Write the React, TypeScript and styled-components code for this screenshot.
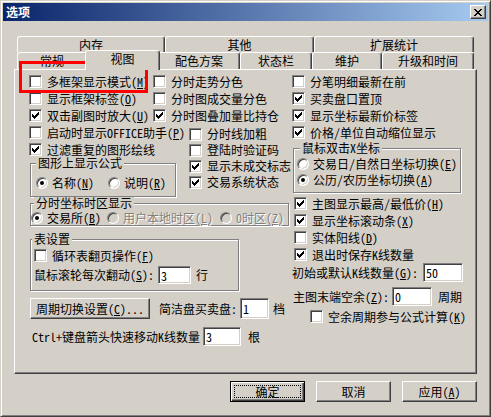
import styled, { createGlobalStyle, css } from "styled-components"
import type { ReactNode } from "react"

const FONT = `"Noto Sans CJK SC", "Liberation Sans", sans-serif`

const GlobalStyle = createGlobalStyle`
  html, body {
    margin: 0;
    background: #d4d0c8;
  }
  * {
    box-sizing: border-box;
  }
  body {
    font-family: ${FONT};
    font-size: 12px;
    color: #000;
    font-feature-settings: "hwid";
  }
`

const TICK_TOPS = [2, 3, 4, 3, 2, 1, 0]

function Tick() {
  return (
    <svg width="7" height="7" viewBox="0 0 7 7" shapeRendering="crispEdges">
      {TICK_TOPS.map((y, x) => (
        <rect key={x} x={x} y={y} width="1" height="3" fill="#000" />
      ))}
    </svg>
  )
}

function CloseGlyph() {
  return (
    <svg width="8" height="7" viewBox="0 0 8 7" shapeRendering="crispEdges">
      <path
        d="M0 0h2v1h1v1h2V1h1V0h2v1H7v1H6v1H5v1h1v1h1v1h1v1H6V6H5V5H3v1H2v1H0V6h1V5h1V4h1V3H2V2H1V1H0z"
        fill="#000"
      />
    </svg>
  )
}

type CheckProps = {
  checked?: boolean
  h?: number
  ml?: number
  mt?: number
  children: ReactNode
}

function Check({ checked, h = 17, ml = 0, mt = 0, children }: CheckProps) {
  return (
    <Item $h={h} $ml={ml} $mt={mt}>
      <CheckBox>{checked && <Tick />}</CheckBox>
      <span>{children}</span>
    </Item>
  )
}

type RadioProps = {
  on?: boolean
  disabled?: boolean
  w?: number
  h?: number
  children: ReactNode
}

function Radio({ on, disabled, w, h = 16, children }: RadioProps) {
  return (
    <Item $h={h} $w={w} $gap={4}>
      <RadioCircle $disabled={disabled}>{on && <RadioDot />}</RadioCircle>
      <Caption $disabled={disabled}>{children}</Caption>
    </Item>
  )
}

function K({ children }: { children: string }) {
  return (
    <>
      (<Key>{children}</Key>)
    </>
  )
}

export default function App() {
  return (
    <>
      <GlobalStyle />
      <Window>
        <TitleBar>
          <Title>选项</Title>
          <CloseButton>
            <CloseGlyph />
          </CloseButton>
        </TitleBar>

        <Body>
          <TabRow $h={16}>
            <Tab $w={148}>内存</Tab>
            <Tab $w={149}>其他</Tab>
            <Tab $w={160}>扩展统计</Tab>
          </TabRow>
          <TabRow $h={17}>
            <Tab $w={70}>常规</Tab>
            <Tab $w={71} $active>
              视图
            </Tab>
            <Tab $w={82}>配色方案</Tab>
            <Tab $w={72}>状态栏</Tab>
            <Tab $w={70}>维护</Tab>
            <Tab $w={92}>升级和时间</Tab>
          </TabRow>

          <Panel>
            <LeftCol>
              <PairRow>
                <Check>
                  多框架显示模式<K>M</K>
                </Check>
                <Check>分时走势分色</Check>
              </PairRow>
              <PairRow>
                <Check>
                  显示框架标签<K>O</K>
                </Check>
                <Check>分时图成交量分色</Check>
              </PairRow>
              <PairRow>
                <Check checked>
                  双击副图时放大<K>U</K>
                </Check>
                <Check checked>分时图叠加量比持仓</Check>
              </PairRow>

              <SplitBlock>
                <BlockLeft>
                  <Check>
                    启动时显示OFFICE助手<K>P</K>
                  </Check>
                  <Check checked>过滤重复的图形绘线</Check>
                  <Group $w={146} $h={34} $mt={5} $ml={1} $pt={11} $pl={5}>
                    <Legend $left={5}>图形上显示公式</Legend>
                    <RadioLine>
                      <Radio on w={72}>
                        名称<K>N</K>
                      </Radio>
                      <Radio>
                        说明<K>R</K>
                      </Radio>
                    </RadioLine>
                  </Group>
                </BlockLeft>
                <BlockRight>
                  <Check h={16}>分时线加粗</Check>
                  <Check h={16}>登陆时验证码</Check>
                  <Check h={16} checked>
                    显示未成交标志
                  </Check>
                  <Check h={16} checked>
                    交易系统状态
                  </Check>
                </BlockRight>
              </SplitBlock>

              <Group $w={259} $h={23} $mt={6} $ml={1} $pt={7} $pl={0}>
                <Legend $left={3}>分时坐标时区显示</Legend>
                <RadioLine>
                  <Radio on w={76} h={14}>
                    交易所<K>B</K>
                  </Radio>
                  <Radio disabled w={113} h={14}>
                    用户本地时区<K>L</K>
                  </Radio>
                  <Radio disabled h={14}>
                    0时区<K>Z</K>
                  </Radio>
                </RadioLine>
              </Group>

              <Group $w={209} $h={52} $mt={13} $ml={1} $pt={7} $pl={3}>
                <Legend $left={1}>表设置</Legend>
                <Check>
                  循环表翻页操作<K>F</K>
                </Check>
                <FieldRow $h={18} $mt={2}>
                  <FieldLabel $w={124}>
                    鼠标滚轮每次翻动<K>S</K>:
                  </FieldLabel>
                  <TextField $w={33} $h={18} defaultValue="3" readOnly />
                  <Unit $ml={5}>行</Unit>
                </FieldRow>
              </Group>

              <FieldRow $h={21} $mt={7} $ml={1}>
                <PushButton $w={120}>
                  周期切换设置<K>C</K>...
                </PushButton>
                <FieldLabel $w={81} $ml={9}>
                  简洁盘买卖盘:
                </FieldLabel>
                <TextField $w={29} $h={21} defaultValue="1" readOnly />
                <Unit $ml={4}>档</Unit>
              </FieldRow>

              <FieldRow $h={19} $mt={8} $ml={3}>
                <FieldLabel $w={171}>Ctrl+键盘箭头快速移动K线数量</FieldLabel>
                <TextField $w={38} $h={19} defaultValue="3" readOnly />
                <Unit $ml={7}>根</Unit>
              </FieldRow>
            </LeftCol>

            <RightCol>
              <Check>分笔明细最新在前</Check>
              <Check checked>买卖盘口置顶</Check>
              <Check checked>显示坐标最新价标签</Check>
              <Check checked>价格/单位自动缩位显示</Check>

              <Group $w={168} $h={45} $mt={7} $ml={1} $pt={7} $pl={3}>
                <Legend $left={6}>鼠标双击X坐标</Legend>
                <Radio>
                  交易日/自然日坐标切换<K>E</K>
                </Radio>
                <Radio on>
                  公历/农历坐标切换<K>A</K>
                </Radio>
              </Group>

              <Check checked ml={2} mt={2}>
                主图显示最高/最低价<K>H</K>
              </Check>
              <Check checked ml={2}>
                显示坐标滚动条<K>X</K>
              </Check>
              <Check ml={2}>
                实体阳线<K>D</K>
              </Check>
              <Check checked ml={2}>
                退出时保存K线数量
              </Check>

              <FieldRow $h={19}>
                <FieldLabel $w={131}>
                  初始或默认K线数量<K>G</K>:
                </FieldLabel>
                <TextField $w={40} $h={19} defaultValue="50" readOnly />
              </FieldRow>
              <FieldRow $h={19} $mt={5} $ml={1}>
                <FieldLabel $w={99}>
                  主图末端空余<K>Z</K>:
                </FieldLabel>
                <TextField $w={40} $h={19} defaultValue="0" readOnly />
                <Unit $ml={6}>周期</Unit>
              </FieldRow>
              <Check ml={18} mt={2}>
                空余周期参与公式计算<K>K</K>
              </Check>
            </RightCol>
          </Panel>

          <Footer>
            <PushButton $w={75} $default>
              确定
            </PushButton>
            <PushButton $w={75}>取消</PushButton>
            <PushButton $w={75}>
              应用<K>A</K>
            </PushButton>
          </Footer>
        </Body>

        <Highlight />
      </Window>
    </>
  )
}

const Window = styled.div`
  position: relative;
  width: 491px;
  height: 417px;
  padding: 2px;
  background: #d4d0c8;
  border: 1px solid;
  border-color: #d4d0c8 #404040 #404040 #d4d0c8;
  box-shadow: inset 1px 1px #fff, inset -1px -1px #808080;
`

const TitleBar = styled.div`
  height: 18px;
  display: flex;
  align-items: center;
  justify-content: space-between;
  padding: 0 2px;
  background: linear-gradient(to right, #0a246a, #a6caf0);
`

const Title = styled.span`
  color: #fff;
  font-weight: bold;
  font-size: 12px;
  line-height: 12px;
  padding-left: 1px;
`

const CloseButton = styled.div`
  width: 16px;
  height: 14px;
  display: flex;
  align-items: center;
  justify-content: center;
  background: #d4d0c8;
  border: 1px solid;
  border-color: #fff #404040 #404040 #fff;
  box-shadow: inset -1px -1px #808080;
`

const Body = styled.div`
  padding: 15px 11px 0;
`

const TabRow = styled.div<{ $h: number }>`
  display: flex;
  align-items: flex-end;
  height: ${(p) => p.$h}px;
  margin: 0 3px;
`

const Tab = styled.div<{ $w: number; $active?: boolean }>`
  flex: none;
  width: ${(p) => p.$w}px;
  height: 100%;
  display: flex;
  align-items: center;
  justify-content: center;
  line-height: 12px;
  background: #d4d0c8;
  border: 1px solid;
  border-bottom: none;
  border-color: #fff #404040 transparent #fff;
  border-radius: 3px 3px 0 0;
  box-shadow: inset -1px 0 #808080;
  white-space: nowrap;

  ${(p) =>
    p.$active &&
    css`
      position: relative;
      z-index: 1;
      width: ${p.$w + 4}px;
      height: calc(100% + 3px);
      margin: 0 -2px -1px;
      padding-bottom: 3px;
    `}
`

const Panel = styled.div`
  display: flex;
  height: 305px;
  padding: 3px 0 0 14px;
  border: 1px solid;
  border-color: #fff #404040 #404040 #fff;
  box-shadow: inset -1px -1px #808080;
`

const LeftCol = styled.div`
  display: flex;
  flex-direction: column;
  width: 263px;
  flex: none;
`

const RightCol = styled.div`
  display: flex;
  flex-direction: column;
  flex: 1;
`

const PairRow = styled.div`
  display: grid;
  grid-template-columns: 124px auto;
`

const SplitBlock = styled.div`
  display: flex;
  align-items: flex-start;
`

const BlockLeft = styled.div`
  display: flex;
  flex-direction: column;
  width: 160px;
  flex: none;
`

const BlockRight = styled.div`
  display: flex;
  flex-direction: column;
  padding-top: 2px;
`

const Item = styled.div<{ $h: number; $w?: number; $ml?: number; $mt?: number; $gap?: number }>`
  display: flex;
  align-items: center;
  gap: ${(p) => p.$gap ?? 5}px;
  height: ${(p) => p.$h}px;
  ${(p) => p.$w !== undefined && `width: ${p.$w}px; flex: none;`}
  margin-left: ${(p) => p.$ml ?? 0}px;
  margin-top: ${(p) => p.$mt ?? 0}px;
  line-height: 12px;
  white-space: nowrap;
`

const CheckBox = styled.span`
  flex: none;
  width: 13px;
  height: 13px;
  display: flex;
  align-items: center;
  justify-content: center;
  background: #fff;
  border: 1px solid;
  border-color: #808080 #fff #fff #808080;
  box-shadow: inset 1px 1px #404040, inset -1px -1px #d4d0c8;
`

const RadioCircle = styled.span<{ $disabled?: boolean }>`
  flex: none;
  width: 12px;
  height: 12px;
  display: flex;
  align-items: center;
  justify-content: center;
  border-radius: 50%;
  background: ${(p) => (p.$disabled ? "#d4d0c8" : "#fff")};
  border: 1px solid;
  border-color: #808080 #fff #fff #808080;
  box-shadow: inset 1px 1px #404040, inset -1px -1px #d4d0c8;
`

const RadioDot = styled.span`
  width: 4px;
  height: 4px;
  border-radius: 50%;
  background: #000;
`

const Caption = styled.span<{ $disabled?: boolean }>`
  ${(p) =>
    p.$disabled &&
    css`
      color: #808080;
      text-shadow: 1px 1px 0 #fff;
    `}
`

const Key = styled.span`
  text-decoration: underline;
`

const RadioLine = styled.div`
  display: flex;
`

const Group = styled.div<{ $w: number; $h: number; $mt: number; $ml: number; $pt: number; $pl: number }>`
  position: relative;
  flex: none;
  width: ${(p) => p.$w}px;
  height: ${(p) => p.$h}px;
  margin-top: ${(p) => p.$mt}px;
  margin-left: ${(p) => p.$ml}px;
  padding: ${(p) => p.$pt}px 0 0 ${(p) => p.$pl}px;
  border: 1px solid #808080;
  box-shadow: 1px 1px 0 #fff, inset 1px 1px 0 #fff;
`

const Legend = styled.span<{ $left: number }>`
  position: absolute;
  top: -7px;
  left: ${(p) => p.$left}px;
  padding: 0 2px;
  line-height: 12px;
  background: #d4d0c8;
  white-space: nowrap;
`

const FieldRow = styled.div<{ $h: number; $mt?: number; $ml?: number }>`
  display: flex;
  align-items: center;
  height: ${(p) => p.$h}px;
  margin-top: ${(p) => p.$mt ?? 0}px;
  margin-left: ${(p) => p.$ml ?? 0}px;
  white-space: nowrap;
  line-height: 12px;
`

const FieldLabel = styled.span<{ $w: number; $ml?: number }>`
  flex: none;
  width: ${(p) => p.$w}px;
  margin-left: ${(p) => p.$ml ?? 0}px;
`

const Unit = styled.span<{ $ml: number }>`
  margin-left: ${(p) => p.$ml}px;
`

const TextField = styled.input<{ $w: number; $h: number }>`
  flex: none;
  width: ${(p) => p.$w}px;
  height: ${(p) => p.$h}px;
  margin: 0;
  padding: 0 0 0 2px;
  font: inherit;
  font-feature-settings: "hwid";
  line-height: 12px;
  color: #000;
  background: #fff;
  border: 1px solid;
  border-color: #808080 #fff #fff #808080;
  box-shadow: inset 1px 1px #404040, inset -1px -1px #d4d0c8;
  outline: none;
`

const PushButton = styled.button<{ $w: number; $default?: boolean }>`
  position: relative;
  flex: none;
  width: ${(p) => p.$w}px;
  height: 21px;
  margin: 0;
  padding: 0;
  font: inherit;
  font-feature-settings: "hwid";
  line-height: 12px;
  color: #000;
  background: #d4d0c8;
  border: 1px solid;
  border-color: #fff #404040 #404040 #fff;
  box-shadow: inset -1px -1px #808080;

  ${(p) =>
    p.$default &&
    css`
      border-color: #000;
      box-shadow: inset 1px 1px #fff, inset -1px -1px #404040, inset -2px -2px #808080;

      &::after {
        content: "";
        position: absolute;
        inset: 3px;
        border: 1px dotted #000;
      }
    `}
`

const Footer = styled.div`
  display: flex;
  justify-content: flex-end;
  gap: 11px;
  margin-top: 7px;
`

const Highlight = styled.div`
  position: absolute;
  left: 18px;
  top: 60px;
  width: 129px;
  height: 32px;
  border: 3px solid #f00;
  pointer-events: none;
`
